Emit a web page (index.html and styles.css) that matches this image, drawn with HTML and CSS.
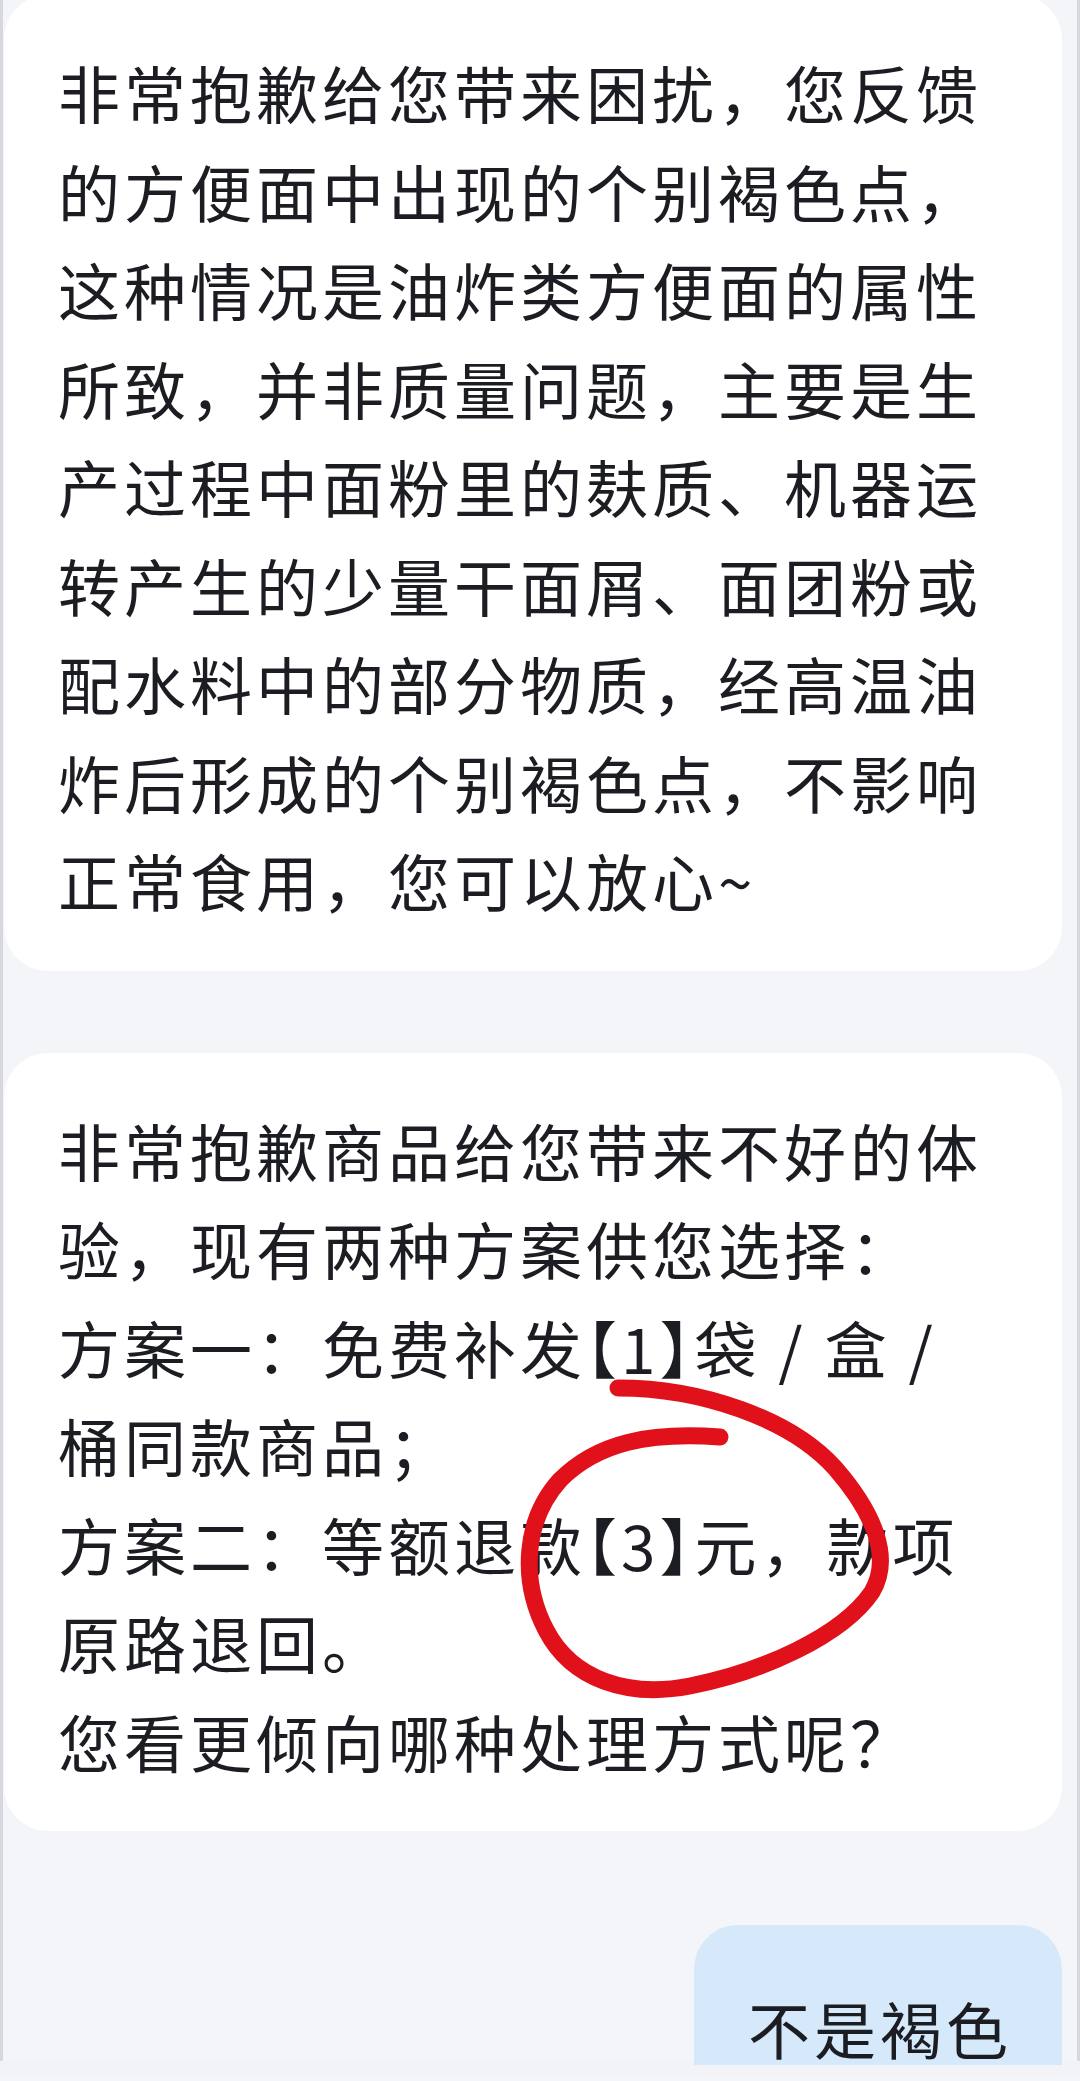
FILE: index.html
```html
<!DOCTYPE html>
<html lang="zh-CN">
<head>
    <meta charset="UTF-8">
    <meta name="viewport" content="width=device-width, initial-scale=1.0">
    <title>客服对话</title>
    <link rel="stylesheet" href="styles.css">
</head>
<body>

    <div class="screen">
        <div class="chat">
            <div class="bubble bubble-left">
                非常抱歉给您带来困扰，您反馈<br>
                的方便面中出现的个别褐色点，<br>
                这种情况是油炸类方便面的属性<br>
                所致，并非质量问题，主要是生<br>
                产过程中面粉里的麸质、机器运<br>
                转产生的少量干面屑、面团粉或<br>
                配水料中的部分物质，经高温油<br>
                炸后形成的个别褐色点，不影响<br>
                正常食用，您可以放心~
            </div>

            <div class="bubble bubble-left">
                非常抱歉商品给您带来不好的体<br>
                验，现有两种方案供您选择：<br>
                方案一：免费补发<span class="num">【1】</span>袋 / 盒 /<br>
                桶同款商品；<br>
                方案二：等额退款<span class="num">【3】</span>元，款项<br>
                原路退回。<br>
                您看更倾向哪种处理方式呢？
            </div>

            <div class="bubble bubble-right">不是褐色</div>
        </div>
    </div>
    <div class="footer"></div>

    <!-- hand drawn circle on top of the screenshot -->
    <svg class="scribble" width="1080" height="2081" viewBox="0 0 1080 2081">
        <path d="M618,1388 C700,1388 790,1418 835,1468 C875,1514 892,1558 872,1592 C842,1636 762,1672 690,1686 C628,1698 572,1680 546,1630 C520,1580 524,1520 560,1480 C598,1442 650,1432 720,1437"
              fill="none" stroke="#e0111b" stroke-width="17" stroke-linecap="round" stroke-linejoin="round"/>
    </svg>

</body>
</html>
```

FILE: styles.css
```css
:root {
    --background-color: #f4f5f9;
    --bubble-bg: #FFFFFF;
    --bubble-self: #d5e9fb;
    --text-color: #1b1d23;
    --edge-color: #d6d8de;
}

body {
    margin: 0;
    width: 1080px;
    height: 2081px;
    overflow: hidden;
    position: relative;
    background-color: var(--background-color);
    font-family: "Noto Sans CJK SC", "Noto Sans", sans-serif;
    color: var(--text-color);
}

.screen {
    box-sizing: border-box;
    height: 2066px;
    border-left: 3px solid var(--edge-color);
    border-right: 3px solid var(--edge-color);
    padding: 0 15px 0 1px;
}

.chat {
    display: flex;
    flex-direction: column;
    gap: 82px;
    margin-top: -5px;
}

.bubble {
    background-color: var(--bubble-bg);
    border-radius: 44px;
    padding: 48px 50px 41px 54px;
    font-size: 62px;
    letter-spacing: 4px;
    line-height: 98.5px;
    white-space: nowrap;
}

/* the last bubble runs past the bottom of the screenshot */
.bubble-right {
    align-self: flex-end;
    background-color: var(--bubble-self);
    margin-top: 12px;
    padding: 68px 50px 2px 54px;
    line-height: 70px;
    border-radius: 44px 44px 0 0;
}

.num {
    font-feature-settings: "halt";
}

.footer {
    height: 15px;
    background-color: #f2f3f7;
}

.scribble {
    position: absolute;
    top: 0;
    left: 0;
    pointer-events: none;
}
```
